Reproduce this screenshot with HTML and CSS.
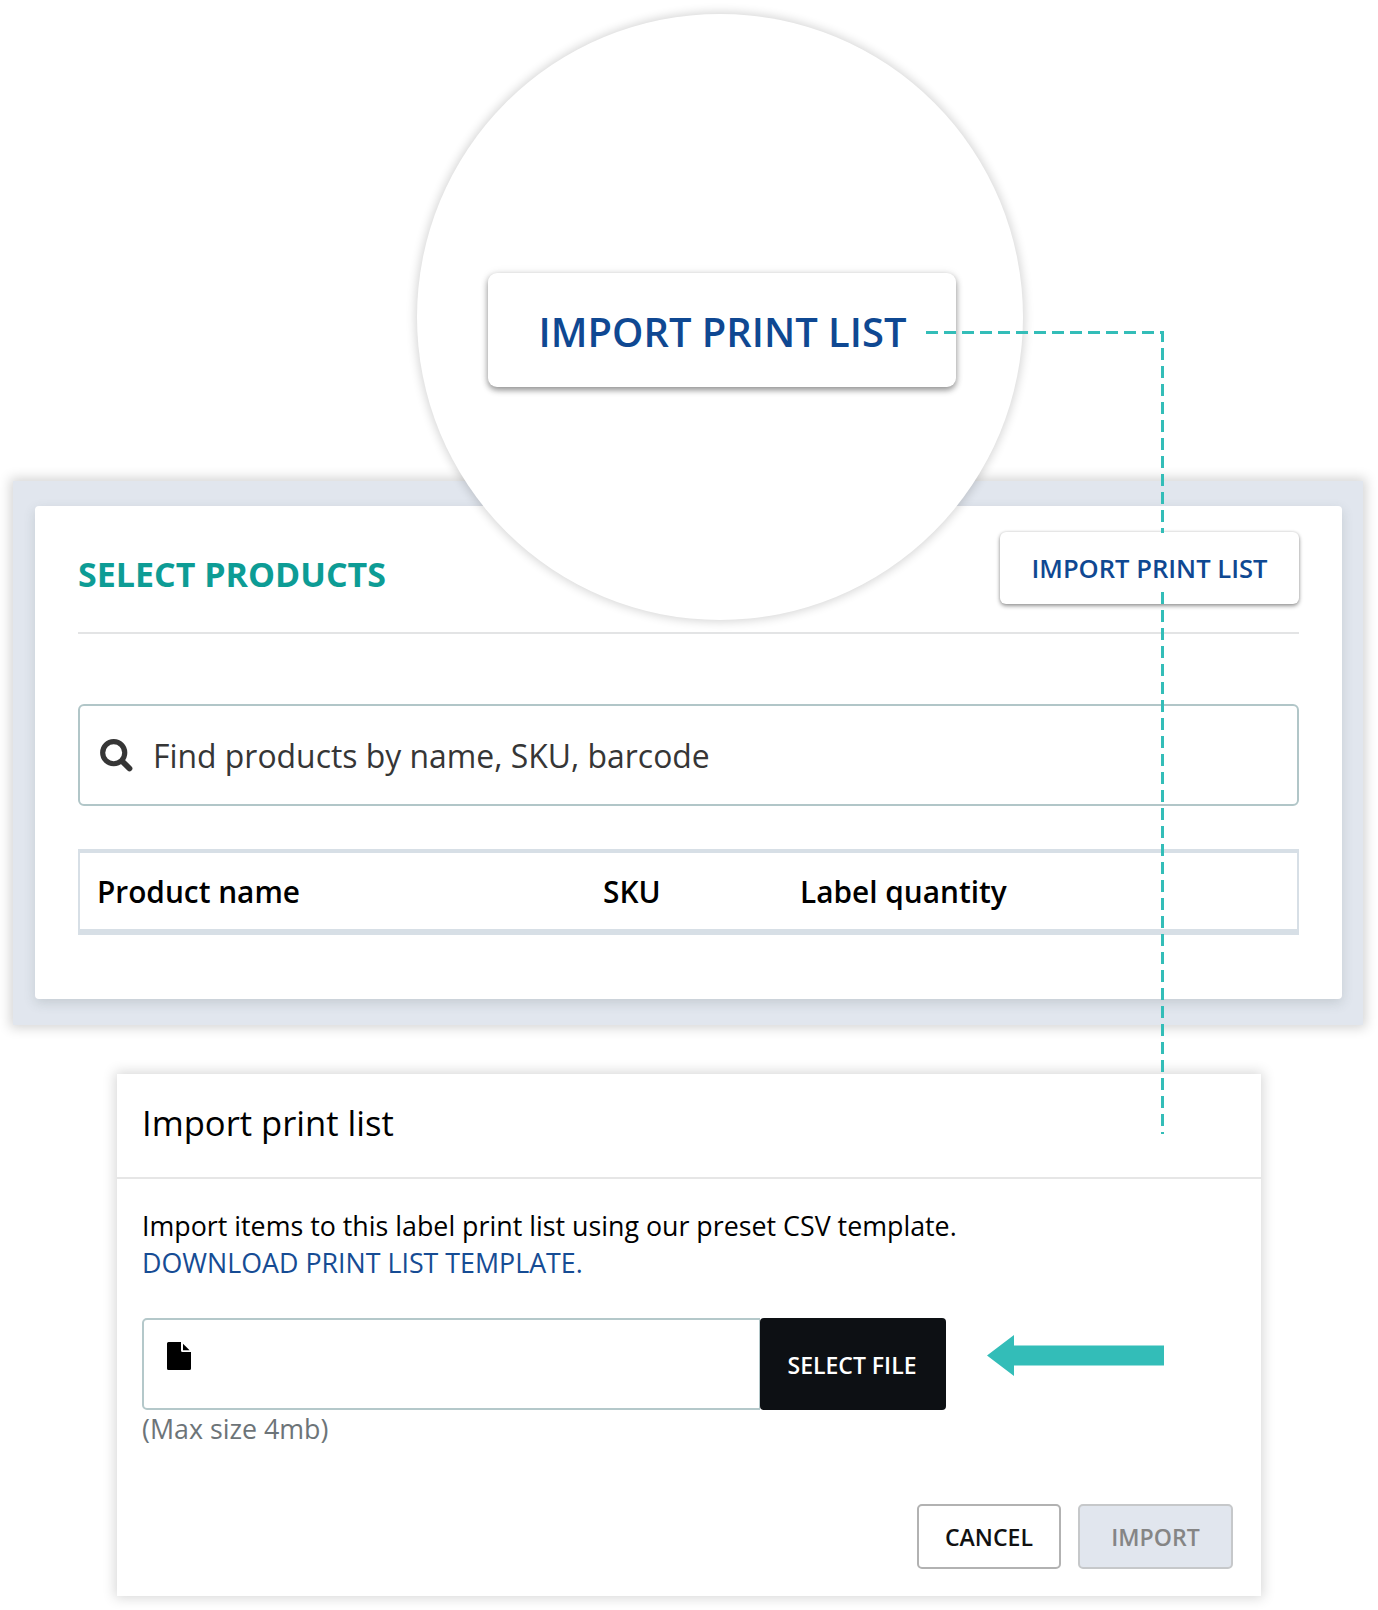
FILE: index.html
```html
<!DOCTYPE html>
<html lang="en">
<head>
<meta charset="utf-8">
<title>Import print list</title>
<link rel="stylesheet" href="styles.css">
</head>
<body>
<main class="page">
  <section class="backdrop">
    <div class="card">
      <header class="card-head">
        <h1 class="card-title">SELECT PRODUCTS</h1>
        <button class="raised-button"><span>IMPORT PRINT LIST</span></button>
      </header>
      <div class="search">
        <svg class="search-icon" viewBox="0 0 32 32"><circle cx="13.3" cy="13.3" r="10.7" fill="none" stroke="#363636" stroke-width="5"/><path d="M21.500 21.500L28.600 28.600" stroke="#363636" stroke-width="5.600" stroke-linecap="round"/></svg>
        <span class="search-text">Find products by name, SKU, barcode</span>
      </div>
      <div class="columns">
        <span class="col-name">Product name</span>
        <span class="col-sku">SKU</span>
        <span class="col-qty">Label quantity</span>
      </div>
    </div>
  </section>

  <section class="dialog">
    <header class="dialog-head"><h2 class="dialog-title">Import print list</h2></header>
    <div class="dialog-body">
      <p class="intro">Import items to this label print list using our preset CSV template.</p>
      <a class="download">DOWNLOAD PRINT LIST TEMPLATE.</a>
      <div class="file-row">
        <div class="file-input"><svg class="file-icon" viewBox="0 0 24 28"><path d="M1.5 0H14V8.500a1.500 1.500 0 0 0 1.500 1.500H24V26.500a1.500 1.500 0 0 1-1.500 1.500H1.500A1.500 1.500 0 0 1 0 26.500V1.500A1.500 1.500 0 0 1 1.500 0Z"/><path d="M16 1.700L22.600 8.300H16Z"/></svg></div>
        <button class="select-file"><span>SELECT FILE</span></button>
        <svg class="arrow" viewBox="0 0 177 41"><path d="M0 20.500L27 0V10.500H177V30.500H27V41Z" fill="#33bdb8"/></svg>
      </div>
      <p class="hint">(Max size 4mb)</p>
    </div>
    <footer class="dialog-foot">
      <button class="cancel"><span>CANCEL</span></button>
      <button class="import"><span>IMPORT</span></button>
    </footer>
  </section>

  <div class="lens"><div class="lens-button"><span>IMPORT PRINT LIST</span></div></div>
  <svg class="connector" viewBox="0 0 1378 1610">
    <path d="M926 332.500H1162.500V533"/>
    <path d="M1162.500 592V1134"/>
  </svg>
</main>
</body>
</html>
```
FILE: styles.css
```css
* { box-sizing: border-box; }
body { margin: 0; background: #fff; font-family: "Open Sans", "Noto Sans", sans-serif; }
h1, h2, p { margin: 0; }
button { font-family: inherit; padding: 0; border: 0; }
span, h1, h2, p, a { white-space: nowrap; }

.page { position: relative; width: 1378px; height: 1610px; padding-top: 481px; overflow: hidden; }

.backdrop { width: 1350px; height: 544px; margin-left: 13px; padding: 25px 21px 26px 22px; background: #e1e6ee; box-shadow: 0 0 11px 3px rgba(0, 0, 0, .17); }
.card { height: 493px; padding: 26px 43px 0; background: #fff; border-radius: 4px; box-shadow: 0 4px 12px rgba(60, 80, 75, .17); }
.card-head { display: flex; justify-content: space-between; height: 102px; border-bottom: 2px solid #e3e4e5; }
.card-title { padding-top: 19px; font-size: 34px; line-height: 46px; font-weight: 700; color: #0d9c95; }
.raised-button { width: 299px; height: 72px; padding-top: 1px; border-radius: 6px; background: #fff; color: #0f4892; font-size: 25.6px; font-weight: 600; box-shadow: 0 2px 4px rgba(0, 0, 0, .4), 0 0 3px rgba(0, 0, 0, .14); }

.search { display: flex; align-items: center; height: 102px; margin-top: 70px; padding-left: 20px; border: 2px solid #b1c6c8; border-radius: 6px; }
.search-icon { width: 33px; height: 33px; margin-right: 20px; margin-top: 1px; }
.search-text { font-size: 31.9px; color: #363636; }

.columns { display: grid; grid-template-columns: 506px 197px 1fr; align-items: center; height: 86px; margin-top: 43px; padding-left: 17px; border: solid #d7dfe6; border-width: 4px 2px 6px; font-size: 29.8px; font-weight: 600; color: #000; }

.dialog { display: flex; flex-direction: column; width: 1144px; height: 522px; margin: 49px 0 0 117px; background: #fff; box-shadow: 0 0 12px 2px rgba(0, 0, 0, .16); }
.dialog-head { height: 105px; padding: 24px 25px 0; border-bottom: 2px solid #e6e6e6; }
.dialog-title { font-size: 34.6px; line-height: 50px; font-weight: 400; color: #000; }
.dialog-body { padding: 29px 25px 0; font-size: 26.8px; line-height: 36px; }
.intro { color: #000; }
.download { display: block; margin-top: 1px; color: #164c94; }
.file-row { display: flex; align-items: flex-start; height: 92px; margin-top: 37px; }
.file-input { width: 618px; height: 92px; padding: 22px 0 0 23px; border: 2px solid #b4c8ca; border-right-width: 1px; border-radius: 5px 0 0 5px; }
.file-icon { display: block; width: 24px; height: 28px; fill: #000; }
.select-file { width: 186px; height: 92px; padding: 2px 2px 0 0; border-radius: 4px; background: #0d1014; color: #fff; font-size: 23px; font-weight: 600; }
.arrow { width: 177px; height: 41px; margin: 17px 0 0 41px; }
.hint { padding-top: 1px; color: #6d7478; }
.dialog-foot { display: flex; justify-content: flex-end; gap: 17px; margin-top: auto; padding: 0 28px 27px 0; }
.cancel, .import { height: 65px; border-radius: 5px; font-size: 23.1px; font-weight: 600; }
.cancel { width: 144px; border: 2px solid #b2b2b2; background: #fff; color: #111; }
.import { width: 155px; border: 2px solid #c6c8ca; background: #e1e6ee; color: #858585; }

.lens { position: absolute; left: 417px; top: 14px; display: flex; width: 606px; height: 606px; padding: 259px 0 0 71px; border-radius: 50%; background: #fff; box-shadow: 0 0 10px 2px rgba(0, 0, 0, .16); }
.lens-button { display: flex; align-items: center; justify-content: center; width: 468px; height: 114px; padding: 3px 0 0 1px; border-radius: 9px; background: #fff; color: #0f4892; font-size: 39.9px; font-weight: 600; box-shadow: 0 3px 6px rgba(0, 0, 0, .42), 0 0 10px rgba(0, 0, 0, .08); }
.connector { position: absolute; left: 0; top: 0; width: 1378px; height: 1610px; fill: none; stroke: #33bdb8; stroke-width: 3; stroke-dasharray: 12 6; pointer-events: none; }
```
